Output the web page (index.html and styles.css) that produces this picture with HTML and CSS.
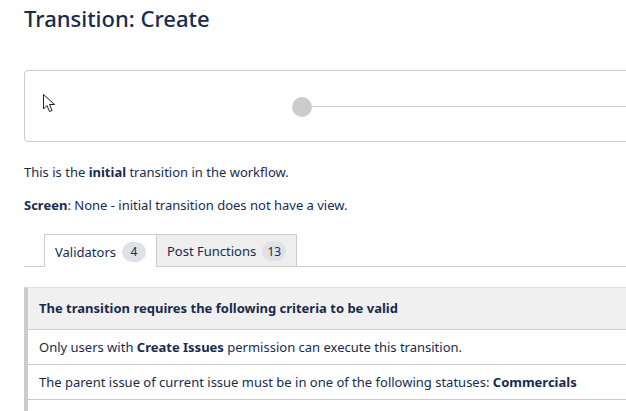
FILE: index.html
```html
<!DOCTYPE html>
<html>
<head>
<meta charset="utf-8">
<link rel="stylesheet" href="styles.css">
</head>
<body>
<div class="page">
  <h1 class="title">Transition: Create</h1>
  <div class="diagram">
    <svg class="cursor" width="14" height="20" viewBox="0 0 14 20">
      <path d="M1.5 1.5 L1.5 16 L5 12.5 L7.5 18.5 L10 17.5 L7.5 11.5 L12.5 11.5 Z" fill="#fff" stroke="#222" stroke-width="1" stroke-linejoin="miter"/>
    </svg>
    <div class="track">
      <span class="dot"></span>
      <span class="line"></span>
    </div>
  </div>
  <p class="info">This is the <b>initial</b> transition in the workflow.</p>
  <p class="info"><b>Screen</b>: None - initial transition does not have a view.</p>
  <div class="tabs">
    <div class="tab active">Validators <span class="badge">4</span></div>
    <div class="tab">Post Functions <span class="badge">13</span></div>
  </div>
  <div class="criteria">
    <div class="row head">The transition requires the following criteria to be valid</div>
    <div class="row">Only users with <b>Create Issues</b> permission can execute this transition.</div>
    <div class="row">The parent issue of current issue must be in one of the following statuses: <b>Commercials</b></div>
    <div class="row">VALIDATE INVOICE CREATE ALLOWED</div>
  </div>
</div>
</body>
</html>
```
FILE: styles.css
```css
html, body {
  margin: 0;
  padding: 0;
  overflow: hidden;
  background: #fff;
}
body {
  font-family: "Segoe UI", "Noto Sans", "Open Sans", sans-serif;
  color: #172b4d;
  font-size: 13px;
}
.page {
  width: 820px;
  padding: 0 0 0 24px;
}
.title {
  margin: 0;
  padding-top: 3px;
  font-size: 22px;
  line-height: 30px;
  font-weight: 500;
  color: #172b4d;
}
.diagram {
  margin-top: 37px;
  height: 70px;
  border: 1px solid #ccc;
  border-radius: 4px;
  display: flex;
  align-items: center;
  position: relative;
}
.cursor {
  position: absolute;
  left: 17px;
  top: 22px;
}
.track {
  margin-left: 267px;
  flex: 1;
  display: flex;
  align-items: center;
  margin-top: 1px;
}
.dot {
  width: 20px;
  height: 20px;
  border-radius: 50%;
  background: #ccc;
  flex: none;
}
.line {
  flex: 1;
  height: 1px;
  background: #ccc;
}
.info {
  margin: 0;
  line-height: 20px;
}
.info:first-of-type {
  margin-top: 20px;
}
.info + .info {
  margin-top: 13px;
}
.info b {
  font-weight: 700;
}
.tabs {
  margin-top: 19px;
  display: flex;
  padding-left: 20px;
  border-bottom: 1px solid #ccc;
  height: 32px;
}
.tab {
  display: flex;
  align-items: center;
  gap: 6px;
  padding: 1px 10px 0 10px;
  border: 1px solid #ccc;
  border-bottom: none;
  background: #eee;
  height: 32px;
  box-sizing: border-box;
  color: #172b4d;
}
.tab.active {
  background: #fff;
  height: 33px;
  border-right: none;
  color: #172b4d;
}
.badge {
  display: inline-flex;
  align-items: center;
  justify-content: center;
  min-width: 24px;
  height: 20px;
  padding: 0 2px;
  box-sizing: border-box;
  border-radius: 10px;
  background: #dfe1e6;
  font-size: 12px;
}
.criteria {
  margin-top: 20px;
  border-left: 4px solid #ccc;
  border-top: 1px solid #ddd;
}
.row {
  padding: 0 11px;
  height: 34px;
  line-height: 34px;
  border-bottom: 1px solid #ccc;
  white-space: nowrap;
}
.row.head {
  height: 41px;
  line-height: 41px;
  background: #f0f0f0;
  font-weight: 700;
}
.row b {
  font-weight: 700;
}
```
